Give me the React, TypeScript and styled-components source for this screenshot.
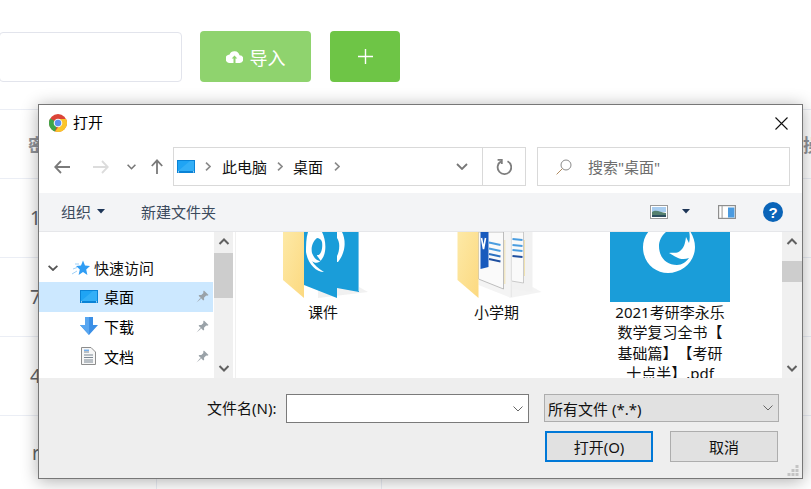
import React from "react";
import styled, { createGlobalStyle } from "styled-components";

const Global = createGlobalStyle`
  html, body { margin: 0; padding: 0; background: #fff; }
  body { font-family: "Noto Sans", "Noto Sans CJK SC", sans-serif; text-spacing-trim: space-all; }
  * { box-sizing: border-box; }
`;

const Page = styled.div`
  position: relative;
  width: 811px;
  height: 489px;
  overflow: hidden;
  background: #fff;
`;

const TopBar = styled.div`
  height: 109px;
  padding-top: 31px;
  display: flex;
  align-items: flex-start;
`;

const SearchField = styled.div`
  width: 183px;
  height: 50px;
  margin-top: 1px;
  margin-left: -1px;
  border: 1px solid #e2e4ec;
  border-radius: 4px;
  background: #fff;
`;

const GreenButton = styled.div<{ $w: number; $ml: number; $bg: string }>`
  width: ${(p) => p.$w}px;
  height: 51px;
  margin-left: ${(p) => p.$ml}px;
  border-radius: 4px;
  background: ${(p) => p.$bg};
  color: #fff;
  font-size: 18px;
  display: flex;
  align-items: center;
  justify-content: center;
  gap: 6px;
`;

const ImportLabel = styled.span`
  margin-left: 1px;
`;

const TableRow = styled.div<{ $h: number }>`
  height: ${(p) => p.$h}px;
  border-top: 1px solid #ebeef5;
  display: grid;
  grid-template-columns: 157px 225px 1fr;
`;

const TableCell = styled.div<{ $head?: boolean; $pl?: number }>`
  border-right: 1px solid #ebeef5;
  padding-left: ${(p) => p.$pl ?? 0}px;
  display: flex;
  align-items: center;
  font-size: ${(p) => (p.$head ? 18 : 19)}px;
  font-weight: ${(p) => (p.$head ? 700 : 400)};
  color: ${(p) => (p.$head ? "#909399" : "#606266")};
`;

const RightCell = styled.div`
  padding-left: 421px;
  display: flex;
  align-items: center;
  font-size: 18px;
  font-weight: 700;
  color: #909399;
  white-space: nowrap;
  overflow: hidden;
`;

const Dialog = styled.div`
  position: absolute;
  left: 38px;
  top: 104px;
  width: 765px;
  height: 375px;
  background: #fff;
  border: 1px solid #777;
  box-shadow: 0 2px 16px rgba(0, 0, 0, 0.32);
  display: flex;
  flex-direction: column;
  font-size: 15px;
  color: #000;
`;

const TitleBar = styled.div`
  height: 36px;
  flex: none;
  padding: 0 14px 0 10px;
  display: flex;
  align-items: center;
  gap: 6px;
  line-height: 1;
`;

const TitleText = styled.span`
  flex: 1;
  margin-bottom: 1px;
`;

const AddressRow = styled.div`
  height: 52px;
  flex: none;
  padding-top: 6px;
  display: flex;
  align-items: flex-start;
`;

const NavIcons = styled.div`
  width: 134px;
  height: 39px;
  flex: none;
  padding-left: 15px;
  display: flex;
  align-items: center;
`;

const AddressBox = styled.div`
  width: 353px;
  height: 39px;
  flex: none;
  border: 1px solid #d9d9d9;
  display: flex;
  align-items: center;
`;

const Crumbs = styled.div`
  flex: 1;
  display: flex;
  align-items: center;
  padding-left: 3px;
  padding-bottom: 1px;
  color: #111;
`;

const CrumbText = styled.span<{ $ml: number }>`
  margin-left: ${(p) => p.$ml}px;
  display: flex;
  align-items: center;
`;

const AddrChevron = styled.div`
  width: 40px;
  height: 100%;
  display: flex;
  align-items: center;
  justify-content: center;
`;

const RefreshCell = styled.div`
  width: 43px;
  height: 100%;
  border-left: 1px solid #d9d9d9;
  display: flex;
  align-items: center;
  justify-content: center;
`;

const SearchBox = styled.div`
  width: 253px;
  height: 39px;
  margin-left: 11px;
  border: 1px solid #d9d9d9;
  padding-left: 18px;
  display: flex;
  align-items: center;
  gap: 16px;
  color: #6d6d6d;
`;

const Toolbar = styled.div`
  height: 39px;
  flex: none;
  background: #f3f4f6;
  border-bottom: 1px solid #e6e7ea;
  padding: 0 0 1px 22px;
  display: flex;
  align-items: center;
  color: #3b4a5c;
`;

const ToolLabel = styled.span<{ $ml?: number }>`
  margin-left: ${(p) => p.$ml ?? 0}px;
`;

const ToolIcons = styled.div`
  margin-left: auto;
  display: flex;
  align-items: center;
  padding-right: 19px;
`;

const Body = styled.div`
  height: 146px;
  flex: none;
  display: flex;
  overflow: hidden;
`;

const NavPane = styled.div`
  width: 175px;
  flex: none;
  padding: 21px 1px 0 0;
`;

const QuickRow = styled.div`
  height: 29px;
  padding-left: 9px;
  display: flex;
  align-items: center;
  color: #111;
`;

const NavRow = styled.div<{ $active?: boolean }>`
  height: 30px;
  padding: 0 4px 2px 41px;
  display: flex;
  align-items: center;
  background: ${(p) => (p.$active ? "#cce8ff" : "transparent")};
`;

const NavIconSlot = styled.span`
  width: 24px;
  height: 24px;
  display: flex;
  align-items: center;
  flex: none;
`;

const NavLabel = styled.span`
  flex: 1;
`;

const Scrollbar = styled.div<{ $w: number; $thumbTop: number; $thumbH: number }>`
  width: ${(p) => p.$w}px;
  flex: none;
  background: #f0f0f0;
  position: relative;
  &::after {
    content: "";
    position: absolute;
    left: 0;
    right: 0;
    top: ${(p) => p.$thumbTop}px;
    height: ${(p) => p.$thumbH}px;
    background: #cdcdcd;
  }
`;

const ScrollArrow = styled.svg<{ $bottom?: boolean }>`
  position: absolute;
  left: 50%;
  margin-left: -6px;
  ${(p) => (p.$bottom ? "bottom: 6px;" : "top: 6px;")}
`;

const Divider = styled.div`
  width: 3px;
  flex: none;
  border-right: 1px solid #f0f0f0;
`;

const Content = styled.div`
  flex: 1;
  padding-left: 27px;
  display: grid;
  grid-template-columns: repeat(3, 120px);
  column-gap: 53.5px;
  align-content: start;
  overflow: hidden;
  background: #fff;
`;

const FileItem = styled.div`
  width: 120px;
  display: flex;
  flex-direction: column;
  align-items: center;
`;

const Thumb = styled.div`
  width: 120px;
  height: 70px;
  display: flex;
  align-items: flex-start;
  justify-content: center;
`;

const FileName = styled.div`
  width: 130px;
  flex: none;
  text-align: center;
  font-size: 15px;
  line-height: 20.4px;
  color: #111;
  white-space: nowrap;
`;

const Footer = styled.div`
  flex: 1;
  position: relative;
  background: #eeeeee;
  padding: 16px 0 0 168px;
`;

const FieldRow = styled.div`
  display: flex;
  align-items: flex-start;
`;

const FieldLabel = styled.label`
  width: 79px;
  line-height: 28px;
  flex: none;
  color: #111;
`;

const FileInput = styled.div`
  width: 243px;
  height: 29px;
  flex: none;
  border: 1px solid #7a7a7a;
  background: #fff;
  padding-right: 5px;
  display: flex;
  align-items: center;
  justify-content: flex-end;
`;

const TypeSelect = styled.div`
  width: 235px;
  height: 28px;
  margin-left: 15px;
  flex: none;
  border: 1px solid #adadad;
  background: #e1e1e1;
  padding: 0 5px 0 3px;
  display: flex;
  align-items: center;
  justify-content: space-between;
  color: #111;
`;

const ButtonRow = styled.div`
  display: flex;
  gap: 17px;
  margin: 8px 0 0 338px;
`;

const DialogButton = styled.div<{ $primary?: boolean }>`
  width: 108px;
  height: 31px;
  border: ${(p) => (p.$primary ? "2px solid #0078d7" : "1px solid #adadad")};
  background: #e1e1e1;
  color: #111;
  padding-bottom: 1px;
  display: flex;
  align-items: center;
  justify-content: center;
`;

const Grip = styled.svg`
  position: absolute;
  right: 3px;
  bottom: 1px;
`;

const Chrome = () => (
  <svg width="18" height="18" viewBox="0 0 18 18">
    <circle cx="9" cy="9" r="9" fill="#db4437" />
    <path d="M9 9 L1.2 4.5 A9 9 0 0 0 6 17.5 Z" fill="#3da648" />
    <path d="M9 5 H17.1 A9 9 0 0 1 9 18 L6 17.5 L10 12 Z" fill="#fbc52b" />
    <circle cx="9" cy="9" r="4.3" fill="#f4f4f4" />
    <circle cx="9" cy="9" r="3.2" fill="#5a90ee" />
  </svg>
);

const Desktop = ({ w = 18, h = 13 }: { w?: number; h?: number }) => (
  <svg width={w} height={h} viewBox="0 0 18 13">
    <rect width="18" height="13" fill="#0a83d6" />
    <path d="M1 1 H17 V11 H1 Z" fill="#1fa4f4" />
    <path d="M1 11 L13 1 H17 V11 Z" fill="#3cb4f8" opacity="0.7" />
    <rect x="1" y="11.4" width="1" height="1" fill="#fff" />
    <rect x="16" y="11.4" width="1" height="1" fill="#fff" />
  </svg>
);

const Pin = () => (
  <svg width="13" height="13" viewBox="0 0 14 14">
    <path d="M8.5 0.5 L13.5 5.5 L12 6.3 L11 6 L8.6 8.4 L8.8 10.5 L7.8 11.3 L2.8 6.3 L3.6 5.3 L5.7 5.5 L8 3.2 L7.7 2 Z" fill="#9aa2a8" />
    <path d="M4.6 8.6 L0.6 13.4 L5.4 9.4 Z" fill="#9aa2a8" />
  </svg>
);

const Chevron = ({ d = "M1 1 L6 6 L11 1", c = "#666", w = 2, sw = 12, sh = 7 }: { d?: string; c?: string; w?: number; sw?: number; sh?: number }) => (
  <svg width={sw} height={sh} viewBox={`0 0 ${sw} ${sh}`} fill="none" stroke={c} strokeWidth={w}>
    <path d={d} />
  </svg>
);

const CrumbSep = () => (
  <svg width="6" height="9" viewBox="0 0 6 9" fill="none" stroke="#8a8a8a" strokeWidth="1.6">
    <path d="M1 0.6 L5 4.5 L1 8.4" />
  </svg>
);

const Logo = () => (
  <svg width="120" height="70" viewBox="0 0 120 70">
    <rect width="120" height="70" fill="#1a9dd9" />
    <path
      fill="#fff"
      fillRule="evenodd"
      d="M50 -8 C38 -4 33 6 33 15 C33 31 45 41 58 41 C72 41 85 30 85 15 C85 9 83 4 80 -1 L83 -1 C79 -5 78 -6 76 -8 Z M67 -4 C56 -4 49 6 49 14 C49 25 56 33 67 33 C72 33 76 30 79 26 C74 28 69 27 66 25 C63 24 62 22 59 21 C64 20 66 22 70 19 C74 16 75 12 76 5 L79 11 C80 7 80 3 79 -1 L76 -4 Z"
    />
  </svg>
);

const FolderBlue = () => (
  <svg width="120" height="70" viewBox="1 0 120 70">
    <defs>
      <linearGradient id="fy" x1="0" y1="0" x2="1" y2="1">
        <stop offset="0" stopColor="#fde9a6" />
        <stop offset="1" stopColor="#fcd980" />
      </linearGradient>
    </defs>
    <path d="M56 66 L106 60 L97 55 L56 52 Z" fill="#e8e8e8" opacity="0.6" />
    <path d="M75 0 H97 V60 L75 56 Z" fill="#1a9dd9" />
    <path d="M75 0 H80 C84 8 84 20 76 30 L75 30 Z" fill="#fff" />
    <path d="M75 6 C78 10 78 18 75 24 Z" fill="#1a9dd9" />
    <rect x="96" y="0" width="1" height="59" fill="#7cc4e8" />
    <path d="M42 0 H75 V66 L42 53 Z" fill="#1a9dd9" />
    <path
      fill="#fff"
      fillRule="evenodd"
      d="M46 0 C44 6 44 14 44 20 C46 32 54 40 62 40 C56 36 52 33 50 29 C53 32 58 31 60 27 C65 20 64 8 60 0 Z M55 6 C50 10 49 16 50 21 C52 26 55 29 59 29 C56 25 55 24 55 23 C59 24 61 16 60 10 C59 7 57 6 55 6 Z"
    />
    <path d="M21 0 H42 V66 L21 48 Z" fill="url(#fy)" />
  </svg>
);

const FolderDoc = () => (
  <svg width="120" height="70" viewBox="1.5 0 120 70">
    <defs>
      <linearGradient id="fz" x1="0" y1="0" x2="1" y2="1">
        <stop offset="0" stopColor="#fde9a6" />
        <stop offset="1" stopColor="#fcd980" />
      </linearGradient>
    </defs>
    <path d="M74 66 L106 60 L97 55 L74 52 Z" fill="#e8e8e8" opacity="0.5" />
    <path d="M76 0 H97 V60 L76 57 Z" fill="#f1f1f1" />
    <path d="M76 0 H88 V51 L76 49 Z" fill="#fafafa" stroke="#b8b8b8" strokeWidth="0.7" />
    <rect x="88.5" y="8" width="1" height="36" fill="#f0e2b0" />
    <path d="M77 7 L87 8 M77 13 L87 14 M77 18 L87 19" stroke="#4a9de0" strokeWidth="1.8" />
    <path d="M77 24 L87 25" stroke="#1f4f9f" strokeWidth="1.8" />
    <path d="M43 0 H76 V66 L43 53 Z" fill="#f4f4f4" />
    <rect x="75.3" y="0" width="0.8" height="65" fill="#e2e2e2" />
    <path d="M43 0 H68 V57 L43 47 Z" fill="#fafafa" stroke="#a4a4a4" strokeWidth="0.7" />
    <rect x="68.8" y="8" width="1" height="44" fill="#f0e2b0" />
    <path d="M45 0 H53 V35 L45 37 Z" fill="#185abd" />
    <path d="M46 6 L48 17 L50 6" stroke="#fff" strokeWidth="1.6" fill="none" />
    <path d="M53.5 10.5 L65 13 M53.5 16.5 L65 19" stroke="#4a9de0" strokeWidth="1.8" />
    <path d="M53.5 22 L65 24.5" stroke="#2b70c0" strokeWidth="1.8" />
    <path d="M53.5 27 L65 29.5" stroke="#1f4f9f" strokeWidth="1.8" />
    <path d="M22 0 H43 V66 L22 48 Z" fill="url(#fz)" />
  </svg>
);

const ScrollTrackArrows = () => (
  <>
    <ScrollArrow width="12" height="7" viewBox="0 0 12 7" fill="none" stroke="#606060" strokeWidth="2">
      <path d="M1.5 6 L6 1.5 L10.5 6" />
    </ScrollArrow>
    <ScrollArrow $bottom width="12" height="7" viewBox="0 0 12 7" fill="none" stroke="#606060" strokeWidth="2">
      <path d="M1.5 1 L6 5.5 L10.5 1" />
    </ScrollArrow>
  </>
);

export default function App() {
  return (
    <Page>
      <Global />
      <TopBar>
        <SearchField />
        <GreenButton $w={111} $ml={18} $bg="#8fd36e">
          <svg width="17" height="13" viewBox="0 0 17 13">
            <path
              fill="#fff"
              d="M13.5 5.2 A5.2 5.2 0 0 0 3.6 4.4 A4.2 4.2 0 0 0 4 13 H7.5 V8.6 H5.7 L8.5 5.6 L11.3 8.6 H9.5 V13 H13.2 A3.9 3.9 0 0 0 13.5 5.2 Z"
            />
          </svg>
          <ImportLabel>导入</ImportLabel>
        </GreenButton>
        <GreenButton $w={70} $ml={19} $bg="#6ec546">
          <svg width="15" height="15" viewBox="0 0 15 15" stroke="#fff" strokeWidth="1.4">
            <path d="M7.5 0 V15 M0 7.5 H15" />
          </svg>
        </GreenButton>
      </TopBar>
      <TableRow $h={69}>
        <TableCell $head $pl={28}>密</TableCell>
        <TableCell />
        <RightCell>操作</RightCell>
      </TableRow>
      <TableRow $h={79}>
        <TableCell $pl={30}>1</TableCell>
        <TableCell />
        <RightCell />
      </TableRow>
      <TableRow $h={79}>
        <TableCell $pl={30}>7</TableCell>
        <TableCell />
        <RightCell />
      </TableRow>
      <TableRow $h={79}>
        <TableCell $pl={30}>4</TableCell>
        <TableCell />
        <RightCell />
      </TableRow>
      <TableRow $h={74}>
        <TableCell $pl={32}>r</TableCell>
        <TableCell />
        <RightCell />
      </TableRow>

      <Dialog>
        <TitleBar>
          <Chrome />
          <TitleText>打开</TitleText>
          <svg width="13" height="13" viewBox="0 0 13 13" stroke="#111" strokeWidth="1.1">
            <path d="M0.5 0.5 L12.5 12.5 M12.5 0.5 L0.5 12.5" />
          </svg>
        </TitleBar>

        <AddressRow>
          <NavIcons>
            <svg width="16" height="14" viewBox="0 0 16 14" fill="none" stroke="#7a7a7a" strokeWidth="1.8">
              <path d="M16 7 H1.5 M7 1 L1.2 7 L7 13" />
            </svg>
            <svg width="16" height="14" viewBox="0 0 16 14" fill="none" stroke="#dcdcdc" strokeWidth="1.8" style={{ marginLeft: 23 }}>
              <path d="M0 7 H14.5 M9 1 L14.8 7 L9 13" />
            </svg>
            <svg width="9" height="6" viewBox="0 0 9 6" fill="none" stroke="#777" strokeWidth="1.6" style={{ marginLeft: 18 }}>
              <path d="M0.6 0.8 L4.5 4.7 L8.4 0.8" />
            </svg>
            <svg width="12" height="15" viewBox="0 0 12 15" fill="none" stroke="#7a7a7a" strokeWidth="1.8" style={{ marginLeft: 15 }}>
              <path d="M6 15 V1.5 M0.8 7 L6 1.4 L11.2 7" />
            </svg>
          </NavIcons>
          <AddressBox>
            <Crumbs>
              <Desktop />
              <CrumbText $ml={10}><CrumbSep /></CrumbText>
              <CrumbText $ml={11}>此电脑</CrumbText>
              <CrumbText $ml={10}><CrumbSep /></CrumbText>
              <CrumbText $ml={10}>桌面</CrumbText>
              <CrumbText $ml={11}><CrumbSep /></CrumbText>
            </Crumbs>
            <AddrChevron>
              <Chevron c="#777" w={1.8} />
            </AddrChevron>
            <RefreshCell>
              <svg width="16" height="16" viewBox="0 0 16 16" fill="none" stroke="#7d7d7d" strokeWidth="1.8">
                <path d="M5 2.4 A6.8 6.8 0 1 0 11.5 2.2" />
                <path d="M1.6 0.8 H5.8 V5" strokeLinejoin="miter" />
              </svg>
            </RefreshCell>
          </AddressBox>
          <SearchBox>
            <svg width="16" height="16" viewBox="0 0 16 16" fill="none" stroke="#8a8a8a" strokeWidth="1">
              <circle cx="10" cy="6" r="5" />
              <path d="M6.4 9.6 L0.6 15.4" stroke="#b08a60" />
            </svg>
            <span>搜索"桌面"</span>
          </SearchBox>
        </AddressRow>

        <Toolbar>
          <ToolLabel>组织</ToolLabel>
          <svg width="8" height="5" viewBox="0 0 8 5" style={{ marginLeft: 6 }}>
            <path d="M0 0 H8 L4 4.5 Z" fill="#1d3557" />
          </svg>
          <ToolLabel $ml={36}>新建文件夹</ToolLabel>
          <ToolIcons>
            <svg width="18" height="14" viewBox="0 0 18 14">
              <rect x="0.5" y="0.5" width="17" height="13" fill="#fff" stroke="#9a9a9a" />
              <rect x="2" y="2" width="14" height="5" fill="#a8cdf0" />
              <path d="M2 7 C6 4 10 7 16 8 V12 H2 Z" fill="#55806f" />
              <rect x="2" y="10" width="14" height="2" fill="#2d4f5f" />
            </svg>
            <svg width="8" height="5" viewBox="0 0 8 5" style={{ marginLeft: 14 }}>
              <path d="M0 0 H8 L4 4.5 Z" fill="#1d3557" />
            </svg>
            <svg width="18" height="14" viewBox="0 0 18 14" style={{ marginLeft: 28 }}>
              <rect x="0.6" y="0.6" width="16.8" height="12.8" fill="#fff" stroke="#8e8e8e" strokeWidth="1.2" />
              <rect x="3.5" y="1" width="1.2" height="12" fill="#a8a8a8" />
              <rect x="10" y="2.5" width="6.4" height="10" fill="#4b9be0" />
            </svg>
            <svg width="20" height="20" viewBox="0 0 20 20" style={{ marginLeft: 27 }}>
              <circle cx="10" cy="10" r="10" fill="#0a64b8" />
              <text x="10" y="15.5" textAnchor="middle" fontSize="15" fontWeight="700" fill="#fff" fontFamily="Liberation Sans">?</text>
            </svg>
          </ToolIcons>
        </Toolbar>

        <Body>
          <NavPane>
            <QuickRow>
              <Chevron c="#555" w={1.8} sw={10} sh={6} d="M0.6 0.8 L5 5 L9.4 0.8" />
              <svg width="18" height="16" viewBox="0 0 18 16" style={{ marginLeft: 14, marginRight: 4 }}>
                <path d="M11 0.5 L13 5.5 L18 6 L14.2 9.5 L15.4 15 L11 12 L6.6 15 L7.8 9.5 L4 6 L9 5.5 Z" fill="#2f9df4" />
                <path d="M0 14 L5 11 M1 9 L5 7.5 M3 4 L7 4" stroke="#9fd0f7" strokeWidth="1" />
              </svg>
              快速访问
            </QuickRow>
            <NavRow $active>
              <NavIconSlot><Desktop /></NavIconSlot>
              <NavLabel>桌面</NavLabel>
              <Pin />
            </NavRow>
            <NavRow>
              <NavIconSlot>
                <svg width="18" height="18" viewBox="0 0 18 18">
                  <path d="M5 0 H13 V8 H18 L9 18 L0 8 H5 Z" fill="#3b8fe6" />
                  <path d="M5 0 H9 V18 L0 8 H5 Z" fill="#58a6f0" />
                </svg>
              </NavIconSlot>
              <NavLabel>下载</NavLabel>
              <Pin />
            </NavRow>
            <NavRow>
              <NavIconSlot>
                <svg width="15" height="18" viewBox="0 0 15 18" style={{ marginLeft: 1 }}>
                  <path d="M0.5 0.5 H10 L14.5 5 V17.5 H0.5 Z" fill="#f7f7f7" stroke="#8d8d8d" />
                  <path d="M3 5 H8 M3 8 H12 M3 10.5 H12 M3 13 H12 M3 15 H12" stroke="#7b8793" />
                  <path d="M3 3.2 H8" stroke="#3b8fe6" />
                </svg>
              </NavIconSlot>
              <NavLabel>文档</NavLabel>
              <Pin />
            </NavRow>
          </NavPane>
          <Scrollbar $w={19} $thumbTop={21} $thumbH={45}>
            <ScrollTrackArrows />
          </Scrollbar>
          <Divider />
          <Content>
            <FileItem>
              <Thumb><FolderBlue /></Thumb>
              <FileName>课件</FileName>
            </FileItem>
            <FileItem>
              <Thumb><FolderDoc /></Thumb>
              <FileName>小学期</FileName>
            </FileItem>
            <FileItem>
              <Thumb><Logo /></Thumb>
              <FileName>
                2021考研李永乐<br />数学复习全书【<br />基础篇】【考研<br />十点半】.pdf
              </FileName>
            </FileItem>
          </Content>
          <Scrollbar $w={20} $thumbTop={29} $thumbH={21}>
            <ScrollTrackArrows />
          </Scrollbar>
        </Body>

        <Footer>
          <FieldRow>
            <FieldLabel>文件名(N):</FieldLabel>
            <FileInput>
              <Chevron c="#666" w={1} sw={10} sh={6} d="M0.5 0.5 L5 5 L9.5 0.5" />
            </FileInput>
            <TypeSelect>
              <span>所有文件 (*.*)</span>
              <Chevron c="#666" w={1} sw={10} sh={6} d="M0.5 0.5 L5 5 L9.5 0.5" />
            </TypeSelect>
          </FieldRow>
          <ButtonRow>
            <DialogButton $primary>打开(O)</DialogButton>
            <DialogButton>取消</DialogButton>
          </ButtonRow>
          <Grip width="12" height="12" viewBox="0 0 12 12" fill="#c4c4c4">
            <rect x="8.5" y="0" width="3" height="3" />
            <rect x="4.5" y="4" width="3" height="3" />
            <rect x="8.5" y="4" width="3" height="3" />
            <rect x="0.5" y="8" width="3" height="3" />
            <rect x="4.5" y="8" width="3" height="3" />
            <rect x="8.5" y="8" width="3" height="3" />
          </Grip>
        </Footer>
      </Dialog>
    </Page>
  );
}
